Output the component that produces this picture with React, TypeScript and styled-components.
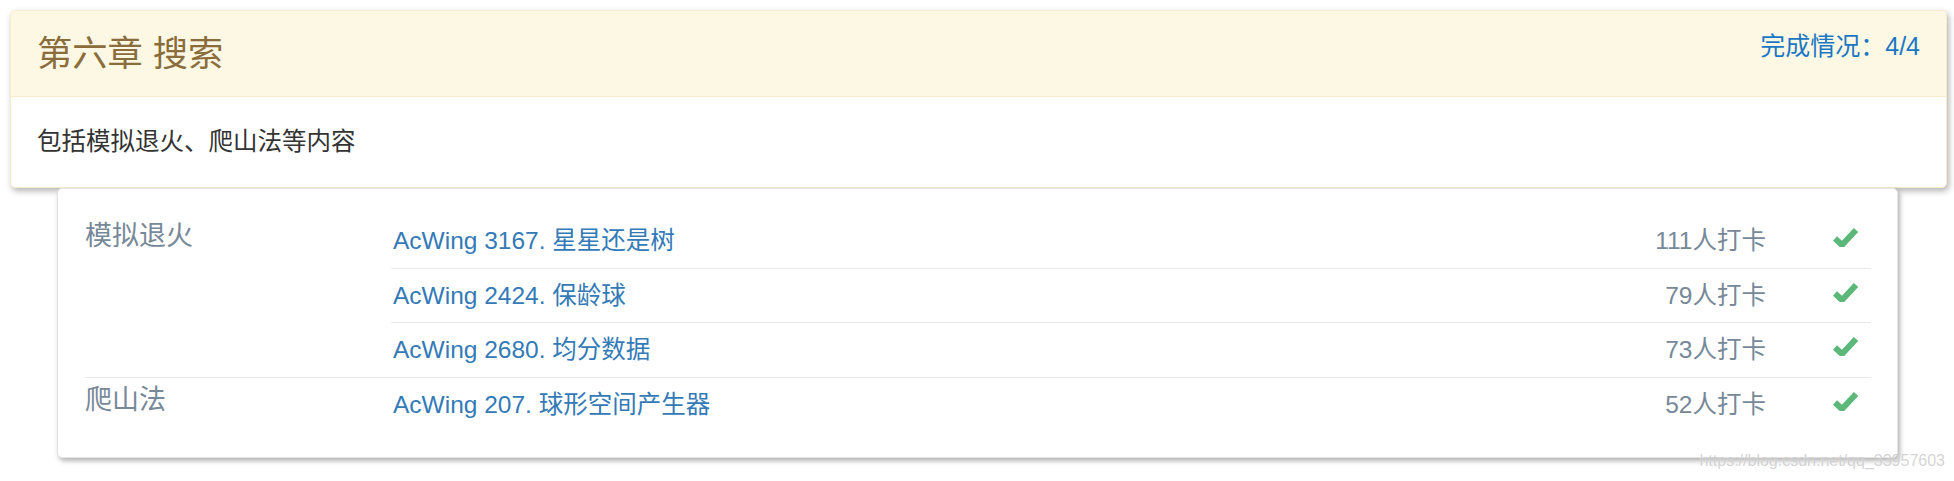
import React from "react";
import styled, { createGlobalStyle } from "styled-components";

const GlobalStyle = createGlobalStyle`
  html, body {
    margin: 0;
    padding: 0;
    background: #ffffff;
  }
  body {
    font-family: "Liberation Sans", "Noto Sans CJK SC", sans-serif;
    color: #333333;
  }
`;

const Page = styled.div`
  position: relative;
  padding: 10px 7px 23px 10px;
`;

const ChapterPanel = styled.section`
  background: #ffffff;
  border: 1px solid #faebcc;
  border-radius: 5px;
  overflow: hidden;
  box-shadow: 2px 3px 6px rgba(0, 0, 0, 0.3);
`;

const ChapterHeader = styled.header`
  display: flex;
  justify-content: space-between;
  align-items: flex-start;
  padding: 23px 26px;
  background: #fcf8e3;
  border-bottom: 1px solid #faebcc;
`;

const ChapterTitle = styled.h3`
  margin: 0;
  font-size: 35.3px;
  line-height: 39px;
  font-weight: 400;
  color: #8a6d3b;
`;

const Progress = styled.div`
  font-size: 25px;
  line-height: 25px;
  color: #1b77c3;
`;

const ChapterBody = styled.div`
  padding: 27px 26px 28px;
  font-size: 24.5px;
  line-height: 35px;
  color: #333333;
`;

const ProblemPanel = styled.section`
  margin: 0 49px 0 47px;
  padding: 25px 26px 26px 27px;
  background: #ffffff;
  border: 1px solid #e4e4e4;
  border-radius: 5px;
  box-shadow: 2px 3px 5px rgba(0, 0, 0, 0.3);
`;

const Group = styled.div`
  display: grid;
  grid-template-columns: 306px 1fr;
  & + & {
    border-top: 1px solid #e9e9e9;
  }
`;

const GroupName = styled.div`
  padding-top: 2px;
  font-size: 27px;
  line-height: 40px;
  color: #778899;
`;

const ProblemList = styled.div`
  display: flex;
  flex-direction: column;
`;

const ProblemRow = styled.div`
  display: flex;
  align-items: center;
  padding: 10px 13px 10px 2px;
  line-height: 33.5px;
  & + & {
    border-top: 1px solid #e9e9e9;
  }
`;

const ProblemLink = styled.a`
  flex: 1;
  font-size: 24.5px;
  color: #337ab7;
  text-decoration: none;
`;

const Count = styled.span`
  font-size: 24.5px;
  color: #778899;
`;

const Check = styled.svg`
  flex: none;
  width: 25px;
  height: 21px;
  margin-left: 67px;
  margin-bottom: 8px;
`;

const Watermark = styled.div`
  position: absolute;
  right: 9px;
  bottom: 12px;
  font-size: 16px;
  line-height: 16px;
  color: rgba(175, 175, 175, 0.55);
  text-shadow: 0 0 1px rgba(255, 255, 255, 0.8);
`;

type Problem = { title: string; count: number };
type ProblemGroup = { name: string; problems: Problem[] };

const groups: ProblemGroup[] = [
  {
    name: "模拟退火",
    problems: [
      { title: "AcWing 3167. 星星还是树", count: 111 },
      { title: "AcWing 2424. 保龄球", count: 79 },
      { title: "AcWing 2680. 均分数据", count: 73 },
    ],
  },
  {
    name: "爬山法",
    problems: [{ title: "AcWing 207. 球形空间产生器", count: 52 }],
  },
];

const CheckIcon = () => (
  <Check viewBox="0 0 25 21" aria-hidden="true">
    <polyline
      points="2,12.5 9,19 23,4"
      fill="none"
      stroke="#5cb879"
      strokeWidth={6}
      strokeLinecap="butt"
      strokeLinejoin="miter"
    />
  </Check>
);

export default function App() {
  return (
    <>
      <GlobalStyle />
      <Page>
        <ChapterPanel>
          <ChapterHeader>
            <ChapterTitle>第六章 搜索</ChapterTitle>
            <Progress>完成情况：4/4</Progress>
          </ChapterHeader>
          <ChapterBody>包括模拟退火、爬山法等内容</ChapterBody>
        </ChapterPanel>
        <ProblemPanel>
          {groups.map((g) => (
            <Group key={g.name}>
              <GroupName>{g.name}</GroupName>
              <ProblemList>
                {g.problems.map((p) => (
                  <ProblemRow key={p.title}>
                    <ProblemLink href="#">{p.title}</ProblemLink>
                    <Count>{p.count}人打卡</Count>
                    <CheckIcon />
                  </ProblemRow>
                ))}
              </ProblemList>
            </Group>
          ))}
        </ProblemPanel>
        <Watermark>https://blog.csdn.net/qq_33957603</Watermark>
      </Page>
    </>
  );
}
